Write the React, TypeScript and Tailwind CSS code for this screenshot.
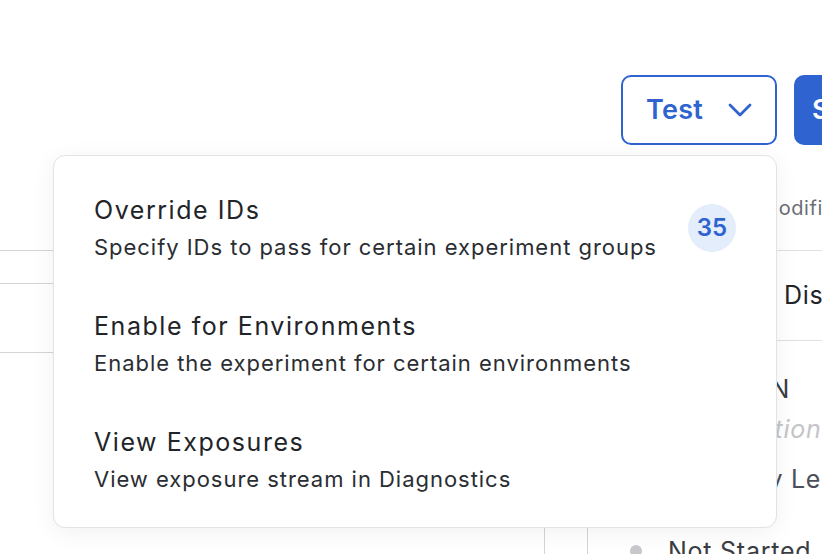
import React from "react";

function Chevron() {
  return (
    <svg width="24" height="14" viewBox="0 0 24 14" fill="none">
      <polyline points="2,2 12,12 22,2" stroke="#2f63cf" strokeWidth="2.8" strokeLinecap="round" strokeLinejoin="round" />
    </svg>
  );
}

const items = [
  { title: "Override IDs", desc: "Specify IDs to pass for certain experiment groups", badge: "35" },
  { title: "Enable for Environments", desc: "Enable the experiment for certain environments" },
  { title: "View Exposures", desc: "View exposure stream in Diagnostics" },
];

export default function App() {
  return (
    <div className="relative w-[822px] h-[554px] overflow-hidden bg-white font-['Inter',sans-serif]">
      <div className="h-[75px]" />
      <div className="flex h-[70px] pl-[621px]">
        <button className="flex h-[70px] w-[156px] shrink-0 items-center justify-center gap-[25px] rounded-[10px] border-2 border-[#2f63cf] bg-white">
          <span className="text-[27px] font-semibold tracking-[0.01em] text-[#2f63cf]">Test</span>
          <Chevron />
        </button>
        <button className="ml-[17px] flex h-[70px] w-[140px] shrink-0 items-center rounded-[10px] bg-[#2f63cf] pl-[18px] text-[27px] font-semibold text-white">
          Start
        </button>
      </div>
      <div className="flex h-[409px]">
        <div className="flex w-[588px] shrink-0 flex-col">
          <div className="h-[106px] border-b border-[#d4d4d8]" />
          <div className="h-[33px] border-b border-[#d4d4d8]" />
          <div className="h-[69px] border-b border-[#d4d4d8]" />
          <div className="flex flex-1">
            <div className="flex-1" />
            <div className="w-[44px] border-x border-[#d4d4d8]" />
          </div>
        </div>
        <div className="flex min-w-0 flex-1 flex-col overflow-hidden">
          <div className="flex h-[106px] shrink-0 items-start border-b border-[#e0e0e4] pt-[48px] pl-[172px]">
            <span className="whitespace-nowrap text-[20px] tracking-[0.03em] text-[#6b6e74]">Modified</span>
          </div>
          <div className="flex h-[90px] shrink-0 items-center border-b border-[#e0e0e4] pl-[196px]">
            <span className="whitespace-nowrap text-[25px] tracking-[0.03em] text-[#222428]">Disabled</span>
          </div>
          <div className="flex flex-col">
            <span className="mt-[33px] whitespace-nowrap pl-[27px] text-[25px] leading-[30px] tracking-[0.03em] text-[#3b3d42]">DESCRIPTION</span>
            <span className="mt-[10px] whitespace-nowrap pl-[11px] text-[25px] italic leading-[30px] tracking-[0.03em] text-[#c4c5c9]">Add a description</span>
            <span className="mt-[20px] whitespace-nowrap pl-[149px] text-[25px] leading-[30px] tracking-[0.03em] text-[#4b4f57]">Key Learnings</span>
            <div className="mt-[42px] flex items-center gap-[26px] pl-[42px]">
              <span className="h-[12px] w-[12px] shrink-0 rounded-full bg-[#c7c8cc]" />
              <span className="whitespace-nowrap text-[25px] leading-[30px] tracking-[0.03em] text-[#3b3d42]">Not Started</span>
            </div>
          </div>
        </div>
      </div>

      <div className="absolute left-[53px] top-[155px] flex h-[373px] w-[724px] flex-col rounded-[12px] border border-[#e2e2e7] bg-white pt-[13px] shadow-[0_4px_24px_rgba(0,0,0,0.06)]">
        {items.map((it) => (
          <div key={it.title} className="flex items-center justify-between pl-[40px] pr-[40px] pt-[25px] pb-[24px]">
            <div className="flex flex-col">
              <span className="whitespace-nowrap text-[25px] leading-[32px] tracking-[0.062em] text-[#212428]">{it.title}</span>
              <span className="mt-[7px] whitespace-nowrap text-[22px] leading-[28px] tracking-[0.044em] text-[#2a2d32]">{it.desc}</span>
            </div>
            {it.badge && (
              <span className="flex h-[48px] w-[48px] shrink-0 items-center justify-center rounded-full bg-[#e4edfc] text-[24px] font-semibold text-[#2f63cf]">
                {it.badge}
              </span>
            )}
          </div>
        ))}
      </div>
    </div>
  );
}
